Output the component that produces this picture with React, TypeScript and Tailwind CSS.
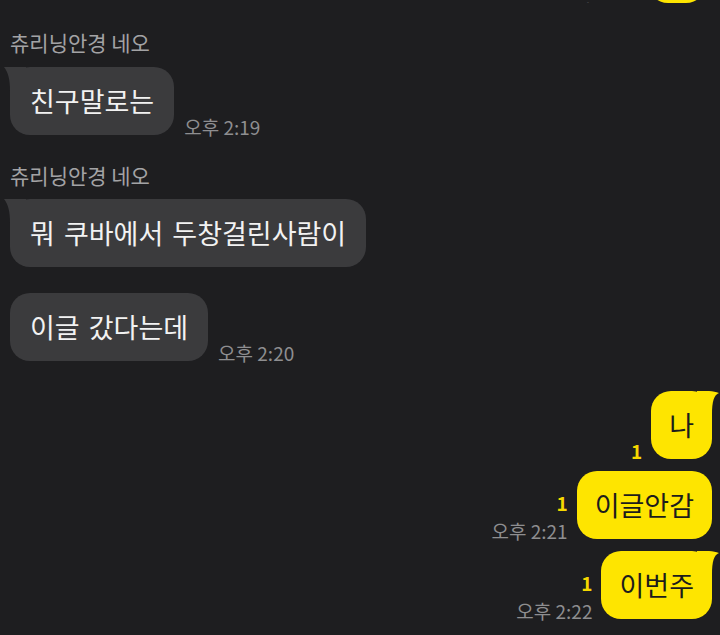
import React from 'react';

type Msg = { text: string; time?: string; tail?: boolean };

const font = { fontFamily: '"Noto Sans CJK KR", "Noto Sans", sans-serif' };

const LeftTail = () => (
  <svg className="absolute left-[-6px] top-0" width="22" height="24" viewBox="0 0 22 24">
    <path d="M0 0 L22 0 L22 24 L6 24 C6 12 4 5 0 0 Z" fill="#3b3b3d" />
  </svg>
);

const RightTail = () => (
  <svg className="absolute right-[-7px] top-0" width="22" height="24" viewBox="0 0 22 24">
    <path d="M22 2 C17 4 15 10 15 24 L0 24 L0 0 L12 0 C16 0 19 1 22 2 Z" fill="#fee500" />
  </svg>
);

function Incoming({ text, time, tail }: Msg) {
  return (
    <div className="flex items-end gap-[10px]">
      <div className="relative rounded-[20px] bg-[#3b3b3d] px-[20px] py-[15px] text-[27px] leading-[38px] text-[#f2f2f2] [word-spacing:3px]">
        {tail ? <LeftTail /> : null}
        <span className="relative">{text}</span>
      </div>
      {time ? <span className="mb-[-3px] text-[19px] leading-[22px] text-[#8e8e90]">{time}</span> : null}
    </div>
  );
}

function Outgoing({ text, time, tail }: Msg) {
  return (
    <div className="flex items-end justify-end gap-[9px] pr-[8px]">
      <div className="mb-[-3px] flex flex-col items-end">
        <span className="text-[19px] font-bold leading-[22px] text-[#f5d800]">1</span>
        {time ? <span className="mt-[6px] text-[19px] leading-[22px] text-[#8e8e90]">{time}</span> : null}
      </div>
      <div className="relative rounded-[20px] bg-[#fee500] px-[18px] py-[15px] text-[27px] leading-[38px] text-[#1c1c1c]">
        {tail ? <RightTail /> : null}
        <span className="relative">{text}</span>
      </div>
    </div>
  );
}

export default function App() {
  return (
    <div className="h-[635px] w-[720px] overflow-hidden bg-[#1e1e20] px-[10px]" style={font}>
      <div className="-mx-[10px] flex h-[3px] items-end justify-end gap-[10px] overflow-hidden pr-[14px]">
        <span className="mb-[-19px] text-[19px] leading-[22px] text-[#8e8e90]">오후 2:18</span>
        <div className="h-[60px] w-[58px] shrink-0 rounded-[20px] bg-[#fee500]" />
      </div>

      <div className="mt-[27px] text-[21px] leading-[24px] text-[#a3a3a5]">츄리닝안경 네오</div>
      <div className="mt-[13px]">
        <Incoming text="친구말로는" time="오후 2:19" tail />
      </div>

      <div className="mt-[28px] text-[21px] leading-[24px] text-[#a3a3a5]">츄리닝안경 네오</div>
      <div className="mt-[12px]">
        <Incoming text="뭐 쿠바에서 두창걸린사람이" tail />
      </div>
      <div className="mt-[26px]">
        <Incoming text="이글 갔다는데" time="오후 2:20" />
      </div>

      <div className="-mx-[10px] mt-[30px] flex flex-col gap-[12px]">
        <Outgoing text="나" tail />
        <Outgoing text="이글안감" time="오후 2:21" />
        <Outgoing text="이번주" time="오후 2:22" tail />
      </div>
    </div>
  );
}
